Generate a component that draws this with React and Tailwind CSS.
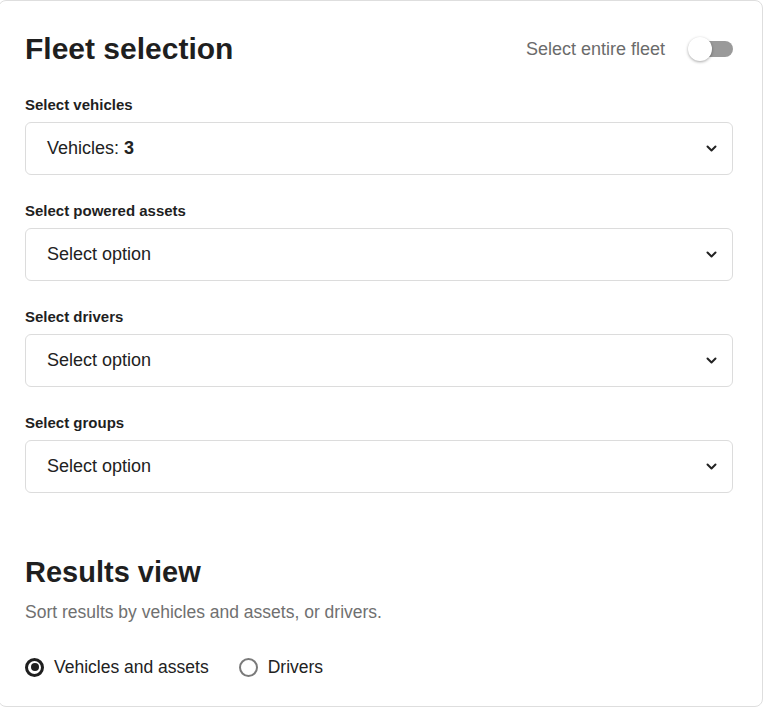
import React from 'react';

const fields = [
  { label: 'Select vehicles', value: 'Vehicles: ', count: '3' },
  { label: 'Select powered assets', value: 'Select option' },
  { label: 'Select drivers', value: 'Select option' },
  { label: 'Select groups', value: 'Select option' },
];

function Chevron() {
  return (
    <svg width="11" height="7" viewBox="0 0 11 7" fill="none">
      <path d="M1.5 1.5l4 4 4-4" stroke="#222" strokeWidth="2" strokeLinecap="round" strokeLinejoin="round" />
    </svg>
  );
}

function Toggle() {
  return (
    <div className="relative w-[45px] h-[24px]">
      <div className="absolute right-0 top-[4px] w-[35px] h-[16px] rounded-full bg-[#9a9a9a]" />
      <div className="absolute left-0 top-0 w-[24px] h-[24px] rounded-full bg-white shadow-[0_1px_3px_rgba(0,0,0,0.35)]" />
    </div>
  );
}

function SelectField({ label, value, count }) {
  return (
    <div>
      <div className="text-[15px] leading-[18px] font-bold text-[#1f1f1f] mb-2">{label}</div>
      <div className="h-[53px] border border-[#dcdcdc] rounded-md flex items-center justify-between pl-[21px] pr-[15px] cursor-pointer">
        <span className="text-[18px] text-[#222]">
          {value}
          {count && <b>{count}</b>}
        </span>
        <Chevron />
      </div>
    </div>
  );
}

function Radio({ checked, label }) {
  return (
    <label className="flex items-center gap-[10px] text-[17.5px] text-[#222]">
      {checked ? (
        <span className="w-[19px] h-[19px] rounded-full border-[3px] border-[#1f1f1f] flex items-center justify-center">
          <span className="w-[8px] h-[8px] rounded-full bg-[#1f1f1f]" />
        </span>
      ) : (
        <span className="w-[19px] h-[19px] rounded-full border-2 border-[#7a7a7a]" />
      )}
      {label}
    </label>
  );
}

export default function App() {
  return (
    <div className="bg-white min-h-[708px] font-['Liberation_Sans',Arial,sans-serif]">
      <div className="ml-[-2px] w-[765px] h-[707px] border border-[#dedede] rounded-lg pl-[26px] pr-[29px] pt-[30px]">
        <div className="h-[36px] flex items-center justify-between">
          <h1 className="text-[30px] leading-[36px] font-bold text-[#1f1f1f]">Fleet selection</h1>
          <div className="flex items-center gap-[23px]">
            <span className="text-[18px] text-[#6b6b6b]">Select entire fleet</span>
            <Toggle />
          </div>
        </div>

        <div className="mt-[29px] flex flex-col gap-[27px]">
          {fields.map((f) => (
            <SelectField key={f.label} {...f} />
          ))}
        </div>

        <h2 className="mt-[61px] text-[29px] leading-[36px] font-bold text-[#1f1f1f]">Results view</h2>
        <p className="mt-[10px] text-[17.5px] leading-[24px] text-[#707070]">
          Sort results by vehicles and assets, or drivers.
        </p>
        <div className="mt-[31px] h-[24px] flex items-center gap-[30px]">
          <Radio checked label="Vehicles and assets" />
          <Radio label="Drivers" />
        </div>
      </div>
    </div>
  );
}
